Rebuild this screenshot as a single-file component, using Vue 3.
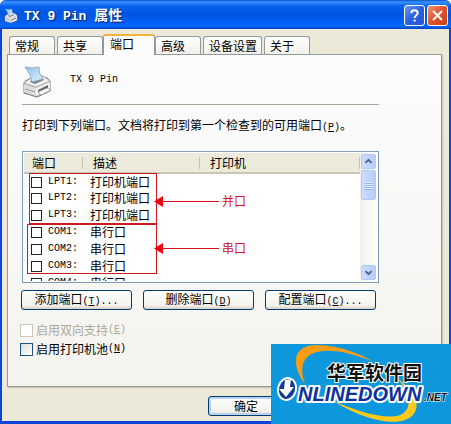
<script setup>
import { ref } from 'vue'

const tabs = ['常规', '共享', '端口', '高级', '设备设置', '关于']
const activeTab = ref('端口')
const ports = ref([
  { name: 'LPT1:', desc: '打印机端口', checked: false },
  { name: 'LPT2:', desc: '打印机端口', checked: false },
  { name: 'LPT3:', desc: '打印机端口', checked: false },
  { name: 'COM1:', desc: '串行口', checked: false },
  { name: 'COM2:', desc: '串行口', checked: false },
  { name: 'COM3:', desc: '串行口', checked: false },
  { name: 'COM4:', desc: '串行口', checked: false }
])
const pooling = ref(false)
</script>

<template>
  <main class="window">
    <header class="titlebar">
      <svg class="title-icon" viewBox="0 0 30 32" aria-hidden="true"><use href="#printer" /></svg>
      <h1><span class="latin">TX 9 Pin </span>属性</h1>
      <button class="caption help" type="button" aria-label="Help">
        <svg viewBox="0 0 19 19"><path d="M6.3 7.2C6.3 3.2 12.7 3.4 12.7 7C12.7 9.2 9.6 9.3 9.6 12" /><path d="M9.6 13.6V15.6" /></svg>
      </button>
      <button class="caption close" type="button" aria-label="Close">
        <svg viewBox="0 0 19 19"><path d="M5 5L14 14M14 5L5 14" /></svg>
      </button>
    </header>

    <div class="body">
      <nav class="tabs" role="tablist">
        <button
          v-for="tab in tabs"
          :key="tab"
          type="button"
          role="tab"
          class="tab"
          :class="{ active: tab === activeTab, wide: tab.length > 2 }"
          :aria-selected="tab === activeTab"
          @click="activeTab = tab"
        >{{ tab }}</button>
      </nav>

      <section class="panel">
        <div class="device">
          <svg class="printer" viewBox="0 0 30 32" aria-hidden="true">
            <defs>
              <linearGradient id="paper" x1="0" y1="0" x2="1" y2="1">
                <stop offset="0" stop-color="#8fc0ee" />
                <stop offset="1" stop-color="#e4f2fd" />
              </linearGradient>
              <g id="printer">
                <path d="M2 17Q2 15 9 12L20 10Q27 12 28 15V25L15 31L2 27Z" fill="#b9b9b9" stroke="#777" />
                <path d="M2 17L9 12L21 10L28 15L14 21Z" fill="#f1f1f1" stroke="#a5a5a5" stroke-width=".7" />
                <path d="M8 16L10 13L20 11L22 14L13 18Z" fill="#7c838b" />
                <path d="M3 1Q10 3 17 1Q16 7 21 13L10 16Q9 8 3 1Z" fill="url(#paper)" stroke="#7f9ab5" stroke-width=".8" />
                <path d="M2 18L14 22V30L2 26Z" fill="#dedede" />
                <path d="M14 22L28 16V24L14 30Z" fill="#f0f0f0" />
                <path d="M16 24L26 19V22L16 27Z" fill="#666" />
                <path d="M16 26L25 22L29 24L19 29Z" fill="#fff" stroke="#888" stroke-width=".7" />
                <path d="M3 23L13 26" stroke="#999" />
              </g>
            </defs>
            <use href="#printer" />
          </svg>
          <span class="latin">TX 9 Pin</span>
        </div>

        <p class="intro">打印到下列端口。文档将打印到第一个检查到的可用端口<span class="latin">(<u>P</u>)</span>。</p>

        <div class="list">
          <div class="list-view">
            <table>
              <thead>
                <tr><th class="col-port">端口</th><th class="col-desc">描述</th><th>打印机</th></tr>
              </thead>
              <tbody>
                <tr v-for="port in ports" :key="port.name">
                  <td class="port-cell">
                    <label><input v-model="port.checked" type="checkbox" /><span class="latin">{{ port.name }}</span></label>
                  </td>
                  <td class="desc-cell">{{ port.desc }}</td>
                  <td></td>
                </tr>
              </tbody>
            </table>
          </div>
          <div class="scrollbar">
            <button type="button" class="arrow" aria-label="Scroll up"><svg viewBox="0 0 15 15"><path d="M4 9L7.500 5.500L11 9" /></svg></button>
            <div class="thumb"><i></i><i></i><i></i><i></i></div>
            <button type="button" class="arrow down" aria-label="Scroll down"><svg viewBox="0 0 15 15"><path d="M4 6L7.500 9.500L11 6" /></svg></button>
          </div>
          <div class="mark parallel"></div>
          <div class="mark serial"></div>
          <div class="note note-parallel">
            <svg viewBox="0 0 65 12" aria-hidden="true"><path d="M8 6.500H65" stroke="#d8101c" /><path d="M0 6.500L9 1V12Z" fill="#f00010" /></svg>并口
          </div>
          <div class="note note-serial">
            <svg viewBox="0 0 65 12" aria-hidden="true"><path d="M8 6.500H65" stroke="#d8101c" /><path d="M0 6.500L9 1V12Z" fill="#f00010" /></svg>串口
          </div>
        </div>

        <div class="actions">
          <button type="button" class="push">添加端口<span class="latin">(<u>T</u>)...</span></button>
          <button type="button" class="push">删除端口<span class="latin">(<u>D</u>)</span></button>
          <button type="button" class="push">配置端口<span class="latin">(<u>C</u>)...</span></button>
        </div>

        <div class="options">
          <label class="disabled"><input type="checkbox" disabled />启用双向支持<span class="latin">(<u>E</u>)</span></label>
          <label><input v-model="pooling" type="checkbox" />启用打印机池<span class="latin">(<u>N</u>)</span></label>
        </div>
      </section>

      <footer class="footer"><button type="button" class="push default">确定</button></footer>
    </div>

    <svg class="watermark" viewBox="0 0 180 80" role="img" aria-label="华军软件园 ONLINEDOWN.NET">
      <rect width="180" height="80" fill="#0d97dc" />
      <path d="M34 40C18 18 24 1 45 1C67 1 88 9 103 18C85 11 68 6 53 7C34 8 27 20 34 40Z" fill="#f99c16" />
      <path d="M126 34C142 46 149 58 144 68C136 83 103 82 62 57C88 68 115 76 129 71C140 67 142 51 126 34Z" fill="#ffc91c" />
      <text class="brand-en" x="27" y="57">NLINEDOWN</text>
      <text class="brand-cn" x="56" y="36">华军软件园</text>
      <ellipse cx="16" cy="45" rx="9" ry="11" transform="rotate(15 16 45)" fill="#10399b" stroke="#fff" stroke-width="2" />
      <path d="M14 36L20 35L19 43H23L15 53L8 45H13Z" fill="#fff" />
      <text class="brand-net" x="153" y="57">.NET</text>
    </svg>
  </main>
</template>

<style>
body {
  margin: 0;
}
</style>

<style scoped>
* {
  box-sizing: border-box;
}
.window {
  position: relative;
  display: flex;
  flex-direction: column;
  min-height: 100vh;
  border: solid #0a45d8;
  border-width: 0 2px 3px;
  border-radius: 6px 6px 0 0;
  background: #ece9d8;
  color: #000;
  font: 12px/16px "Noto Sans CJK SC", sans-serif;
}
button {
  font: inherit;
  color: inherit;
  white-space: nowrap;
}
.latin {
  font-family: "Liberation Mono", monospace;
  font-size: 10px;
  white-space: pre;
}
.titlebar {
  display: flex;
  align-items: center;
  gap: 4px;
  height: 29px;
  margin: 0 -2px;
  padding: 2px 3px 0 4px;
  border-radius: 6px 6px 0 0;
  background: linear-gradient(#0a4fd0 0, #3b93ff 2px, #0562ee 6px, #0055e0 14px, #0360f5 23px, #0268ff 26px, #0044c4 29px);
}
.title-icon {
  width: 14px;
  height: 16px;
}
h1 {
  flex: 1;
  margin: 0 0 0 2px;
  color: #fff;
  font-size: 14px;
  line-height: 20px;
  text-shadow: 1px 1px 1px #0a1f70;
}
h1 .latin {
  font-size: 13px;
}
.caption {
  width: 21px;
  height: 21px;
  padding: 0;
  border: 1px solid #fff;
  border-radius: 3px;
  background: linear-gradient(135deg, #6d99f5, #2a5fe0 50%, #2459dc);
}
.close {
  margin-left: -2px;
  background: linear-gradient(135deg, #f09474, #e0532c 50%, #c93d14);
}
.caption svg {
  display: block;
  fill: none;
  stroke: #fff;
  stroke-width: 2;
}
.body {
  flex: 1;
  display: flex;
  flex-direction: column;
  padding: 6px 7px 0 5px;
}
.tabs {
  display: flex;
  align-items: flex-end;
  gap: 2px;
  height: 19px;
  padding-left: 2px;
}
.tab {
  width: 46px;
  height: 18px;
  padding: 1px 6px 0 5px;
  border: 1px solid #919b9c;
  border-bottom: 0;
  border-radius: 3px 3px 0 0;
  background: linear-gradient(#fff, #f1f0ea);
  line-height: 16px;
  text-align: left;
}
.tab.wide {
  width: 59px;
}
.tab.active {
  z-index: 1;
  width: 52px;
  height: 21px;
  margin: 0 -2px -1px;
  padding: 0 6px 3px;
  border-top: 2px solid #f5b13c;
  background: #fcfcfe;
}
.panel {
  flex: 1;
  padding: 10px 62px 10px 14px;
  border: 1px solid #919b9c;
  box-shadow: 1px 1px 1px #c9c6b5;
  background: linear-gradient(#fcfcfe, #f4f3ee);
}
.device {
  display: flex;
  align-items: flex-start;
  gap: 18px;
  height: 40px;
  padding-top: 1px;
  border-bottom: 1px solid #aca899;
}
.device .latin {
  line-height: 28px;
}
.printer {
  width: 30px;
  height: 32px;
}
.intro {
  margin: 12px 0 15px;
  white-space: nowrap;
}
.list {
  position: relative;
  display: flex;
  height: 132px;
  padding: 1px;
  border: 1px solid #7f9db9;
  background: #fff;
}
.list-view {
  flex: 1;
  overflow: hidden;
}
table {
  width: 100%;
  border-collapse: collapse;
  table-layout: fixed;
}
th {
  height: 20px;
  padding: 0 0 0 10px;
  border-bottom: 2px solid #cbc7b8;
  background: linear-gradient(#c5c2b2, #c5c2b2) right center / 1px 12px no-repeat, #ebeadb;
  font-weight: normal;
  line-height: 16px;
  text-align: left;
}
th.col-port {
  width: 59px;
  padding-left: 8px;
}
th.col-desc {
  width: 117px;
}
td {
  height: 17px;
  padding: 0;
  line-height: 16px;
  vertical-align: top;
}
.port-cell label {
  display: flex;
  align-items: center;
  gap: 6px;
  height: 16px;
  padding-left: 7px;
}
.desc-cell {
  padding-left: 7px;
}
input {
  appearance: none;
  margin: 0;
  border: 1px solid #1c5180;
  background: linear-gradient(135deg, #dcdcd7, #fff);
}
input:checked {
  background: #21a121;
}
.port-cell input {
  width: 11px;
  height: 11px;
  border-color: #222;
  background: #fff;
}
.port-cell input:checked {
  background: #222;
}
.scrollbar {
  display: flex;
  flex-direction: column;
  width: 17px;
  padding: 1px;
  background: linear-gradient(90deg, #f3f1ec, #fefefb);
}
.arrow,
.thumb {
  width: 15px;
  height: 15px;
  padding: 0;
  border: 1px solid #b5c7f3;
  border-radius: 2px;
  background: linear-gradient(90deg, #cddcff, #b9cdfb);
}
.arrow svg {
  display: block;
  fill: none;
  stroke: #4d6185;
  stroke-width: 2;
}
.thumb {
  display: flex;
  flex-direction: column;
  align-items: center;
  justify-content: center;
  gap: 1px;
  height: 30px;
  margin-top: 1px;
}
.thumb i {
  width: 7px;
  height: 1px;
  background: #eef4fe;
  box-shadow: 0 1px #8cb0f8;
}
.down {
  margin-top: auto;
}
.mark {
  position: absolute;
  width: 128px;
  height: 51px;
  border: 1px solid #d01820;
  pointer-events: none;
}
.parallel {
  top: 21px;
  left: 6px;
}
.serial {
  top: 72px;
  left: 4px;
  width: 130px;
  height: 50px;
}
.note {
  position: absolute;
  left: 131px;
  display: flex;
  align-items: center;
  gap: 3px;
  color: #d8101c;
}
.note svg {
  width: 65px;
  height: 12px;
}
.note-parallel {
  top: 41px;
}
.note-serial {
  top: 88px;
}
.actions {
  display: flex;
  gap: 11px;
  margin: 7px 3px 0 -1px;
}
.push {
  flex: 1;
  height: 20px;
  padding: 0;
  border: 1px solid #003c74;
  border-radius: 3px;
  background: linear-gradient(#fff, #f3f2ec 80%, #d8d0c4);
  line-height: 16px;
}
.options {
  display: flex;
  flex-direction: column;
  gap: 3px;
  margin: 12px 0 0 -2px;
}
.options label {
  display: flex;
  align-items: center;
}
.options input {
  width: 13px;
  height: 13px;
  margin-right: 3px;
}
.disabled {
  color: #aca899;
}
.options .disabled input {
  border-color: #cac8bb;
  background: #fff;
}
.footer {
  display: flex;
  padding: 9px 0 5px 201px;
}
.footer .default {
  flex: none;
  width: 76px;
  box-shadow: inset 0 0 0 2px #bcd0f4;
}
.watermark {
  position: absolute;
  right: -2px;
  bottom: -3px;
  width: 180px;
  height: 80px;
}
.brand-cn {
  font: bold 19px "Noto Sans CJK SC", sans-serif;
  fill: #111;
  stroke: #fff;
  stroke-width: 2px;
  paint-order: stroke;
}
.brand-en {
  font: italic bold 20px "Liberation Sans", sans-serif;
  fill: #10309b;
  stroke: #fff;
  stroke-width: 4px;
  stroke-linejoin: round;
  paint-order: stroke;
}
.brand-net {
  font: italic bold 10px "Liberation Sans", sans-serif;
  fill: #111;
  stroke: #fff;
  stroke-width: 1px;
  paint-order: stroke;
}
</style>
